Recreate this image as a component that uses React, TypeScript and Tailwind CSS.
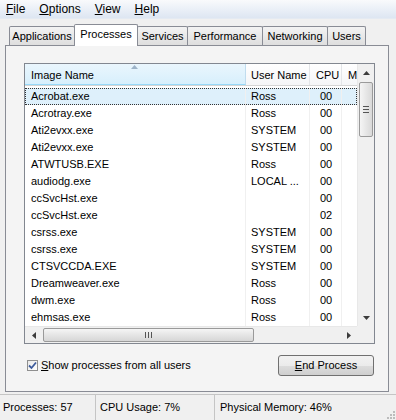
import React from "react";

const rows = [
  ["Acrobat.exe", "Ross", "00"],
  ["Acrotray.exe", "Ross", "00"],
  ["Ati2evxx.exe", "SYSTEM", "00"],
  ["Ati2evxx.exe", "SYSTEM", "00"],
  ["ATWTUSB.EXE", "Ross", "00"],
  ["audiodg.exe", "LOCAL ...", "00"],
  ["ccSvcHst.exe", "", "00"],
  ["ccSvcHst.exe", "", "02"],
  ["csrss.exe", "SYSTEM", "00"],
  ["csrss.exe", "SYSTEM", "00"],
  ["CTSVCCDA.EXE", "SYSTEM", "00"],
  ["Dreamweaver.exe", "Ross", "00"],
  ["dwm.exe", "Ross", "00"],
  ["ehmsas.exe", "Ross", "00"],
];

const tabs = [
  { label: "Applications", w: "w-[66px]" },
  { label: "Processes", w: "w-[64px]", active: true },
  { label: "Services", w: "w-[51px]" },
  { label: "Performance", w: "w-[76px]" },
  { label: "Networking", w: "w-[66px]" },
  { label: "Users", w: "w-[39px]" },
];

const Arrow = ({ dir }: { dir: "up" | "down" | "left" | "right" }) => {
  const pts = {
    up: "0,4 3.5,0 7,4",
    down: "0,0 7,0 3.5,4",
    left: "4,0 4,7 0,3.5",
    right: "0,0 0,7 4,3.5",
  }[dir];
  const vert = dir === "up" || dir === "down";
  return (
    <svg width={vert ? 7 : 4} height={vert ? 4 : 7} viewBox={vert ? "0 0 7 4" : "0 0 4 7"}>
      <polygon points={pts} fill="#3c3c3c" />
    </svg>
  );
};

const App = () => {
  return (
    <div className="w-[396px] h-[420px] overflow-hidden bg-[#f0f0f0] flex flex-col text-[11px] text-black font-['Liberation_Sans',Arial,sans-serif] select-none">
      {/* menu */}
      <div className="h-[19px] flex items-center gap-[14px] pl-[6px] text-[12px] bg-gradient-to-b from-[#f9fafc] to-[#dde6f2] border-b border-[#e4eaf2]">
        <span><u>F</u>ile</span>
        <span><u>O</u>ptions</span>
        <span><u>V</u>iew</span>
        <span><u>H</u>elp</span>
      </div>

      {/* tabs */}
      <div className="mt-[5px] h-[21px] pl-[9px] flex items-end relative z-10">
        {tabs.map((t) =>
          t.active ? (
            <div
              key={t.label}
              className={`${t.w} h-[22px] -mb-[1px] -ml-[1px] bg-white border-t border-x border-[#898c95] rounded-t-[2px] flex items-center justify-center pb-[2px]`}
            >
              {t.label}
            </div>
          ) : (
            <div
              key={t.label}
              className={`${t.w} h-[19px] -ml-[1px] first:ml-0 border-t border-x border-[#898c95] rounded-t-[2px] bg-gradient-to-b from-[#f3f3f3] to-[#dedede] flex items-center justify-center`}
            >
              {t.label}
            </div>
          ),
        )}
      </div>

      {/* panel */}
      <div className="ml-[5px] w-[384px] h-[347px] border border-[#898c95] bg-[#f4f4f4] pl-[18px] pt-[17px] flex flex-col">
        {/* list view */}
        <div className="w-[351px] h-[281px] border border-[#828790] bg-white flex flex-col">
          <div className="h-[262px] flex">
            <div className="w-[332px] flex flex-col overflow-hidden">
              {/* header */}
              <div className="h-[23px] flex border-b border-[#d5d5d5]">
                <div className="relative w-[221px] pl-[6px] pt-[2px] flex items-center bg-gradient-to-b from-[#eaf6fd] to-[#d7effc] border-r border-[#c0dcee] border-b border-b-[#96d9f9]">
                  Image Name
                  <svg className="absolute top-[1px] left-[106px]" width="7" height="4" viewBox="0 0 7 4">
                    <polygon points="0,4 3.5,0 7,4" fill="#9db3c8" />
                  </svg>
                </div>
                <div className="w-[64px] pl-[5px] pt-[2px] flex items-center bg-gradient-to-b from-white to-[#f4f5f7] border-r border-[#e3e5e8]">
                  User Name
                </div>
                <div className="w-[32px] pl-[6px] pt-[2px] flex items-center bg-gradient-to-b from-white to-[#f4f5f7] border-r border-[#e3e5e8]">
                  CPU
                </div>
                <div className="w-[15px] pl-[6px] pt-[2px] flex items-center overflow-hidden bg-gradient-to-b from-white to-[#f4f5f7]">
                  M
                </div>
              </div>
              {/* rows */}
              <div className="pt-[2px] flex flex-col">
                {rows.map((r, i) => (
                  <div
                    key={i}
                    className={`h-[17px] flex items-center ${
                      i === 0 ? "bg-[#def0fb] outline outline-1 outline-dotted outline-[#333] -outline-offset-1" : ""
                    }`}
                  >
                    <div className="w-[221px] pl-[6px] h-full flex items-center border-r border-[#f0f0f0]">{r[0]}</div>
                    <div className="w-[64px] pl-[5px] h-full flex items-center border-r border-[#f0f0f0]">{r[1]}</div>
                    <div className="w-[32px] pl-[10px] h-full flex items-center border-r border-[#f0f0f0]">{r[2]}</div>
                    <div className="w-[15px] h-full" />
                  </div>
                ))}
              </div>
            </div>
            {/* vertical scrollbar */}
            <div className="w-[17px] bg-[#f0f0f0] border-l border-[#e8e8e8] flex flex-col items-center">
              <div className="h-[17px] flex items-center justify-center">
                <Arrow dir="up" />
              </div>
              <div className="mt-[1px] w-[14px] h-[55px] rounded-[2px] border border-[#9a9a9a] bg-gradient-to-r from-[#f5f5f5] to-[#d9d9d9] flex flex-col items-center justify-center gap-[2px]">
                <div className="w-[6px] h-px bg-[#555]" />
                <div className="w-[6px] h-px bg-[#555]" />
                <div className="w-[6px] h-px bg-[#555]" />
              </div>
              <div className="flex-1" />
              <div className="h-[17px] flex items-center justify-center">
                <Arrow dir="down" />
              </div>
            </div>
          </div>
          {/* horizontal scrollbar */}
          <div className="h-[17px] flex">
            <div className="w-[332px] bg-[#f0f0f0] border-t border-[#e8e8e8] flex items-center">
              <div className="w-[17px] flex items-center justify-center">
                <Arrow dir="left" />
              </div>
              <div className="ml-[1px] w-[211px] h-[14px] rounded-[2px] border border-[#9a9a9a] bg-gradient-to-b from-[#f5f5f5] to-[#d6d6d6] flex items-center justify-center gap-[2px]">
                <div className="w-px h-[6px] bg-[#555]" />
                <div className="w-px h-[6px] bg-[#555]" />
                <div className="w-px h-[6px] bg-[#555]" />
              </div>
              <div className="flex-1" />
              <div className="w-[17px] flex items-center justify-center">
                <Arrow dir="right" />
              </div>
            </div>
            <div className="w-[17px] bg-[#f0f0f0]" />
          </div>
        </div>

        {/* checkbox + button */}
        <div className="w-[351px] mt-[11px] flex justify-between items-start">
          <div className="mt-[2px] ml-[3px] flex items-center gap-[3px]">
            <div className="w-[11px] h-[11px] border border-[#8f8f8f] bg-gradient-to-br from-[#e9e9e9] to-white flex items-center justify-center">
              <svg width="9" height="9" viewBox="0 0 9 9">
                <path d="M1 4.5 L3.5 7 L8 1.5" stroke="#3d5b9c" strokeWidth="1.8" fill="none" />
              </svg>
            </div>
            <span><u>S</u>how processes from all users</span>
          </div>
          <div className="w-[96px] h-[21px] mr-[1px] rounded-[3px] border border-[#707070] bg-[linear-gradient(to_bottom,#f2f2f2_0%,#ebebeb_50%,#dddddd_51%,#cfcfcf_100%)] flex items-center justify-center">
            <span><u>E</u>nd Process</span>
          </div>
        </div>
      </div>

      {/* status bar */}
      <div className="mt-[2px] flex-1 border-t border-[#c5c5c5] flex items-center relative">
        <div className="w-[96px] pl-[3px] h-full flex items-center border-r border-[#c5c5c5]">Processes: 57</div>
        <div className="w-[119px] pl-[4px] h-full flex items-center border-r border-[#c5c5c5]">CPU Usage: 7%</div>
        <div className="pl-[5px] h-full flex items-center">Physical Memory: 46%</div>
        <svg className="absolute right-[1px] bottom-[1px]" width="10" height="10" viewBox="0 0 10 10">
          <rect x="8" y="2" width="2" height="2" fill="#bcbcbc" />
          <rect x="5" y="5" width="2" height="2" fill="#bcbcbc" />
          <rect x="8" y="5" width="2" height="2" fill="#bcbcbc" />
          <rect x="2" y="8" width="2" height="2" fill="#bcbcbc" />
          <rect x="5" y="8" width="2" height="2" fill="#bcbcbc" />
          <rect x="8" y="8" width="2" height="2" fill="#bcbcbc" />
        </svg>
      </div>
    </div>
  );
};

export default App;
